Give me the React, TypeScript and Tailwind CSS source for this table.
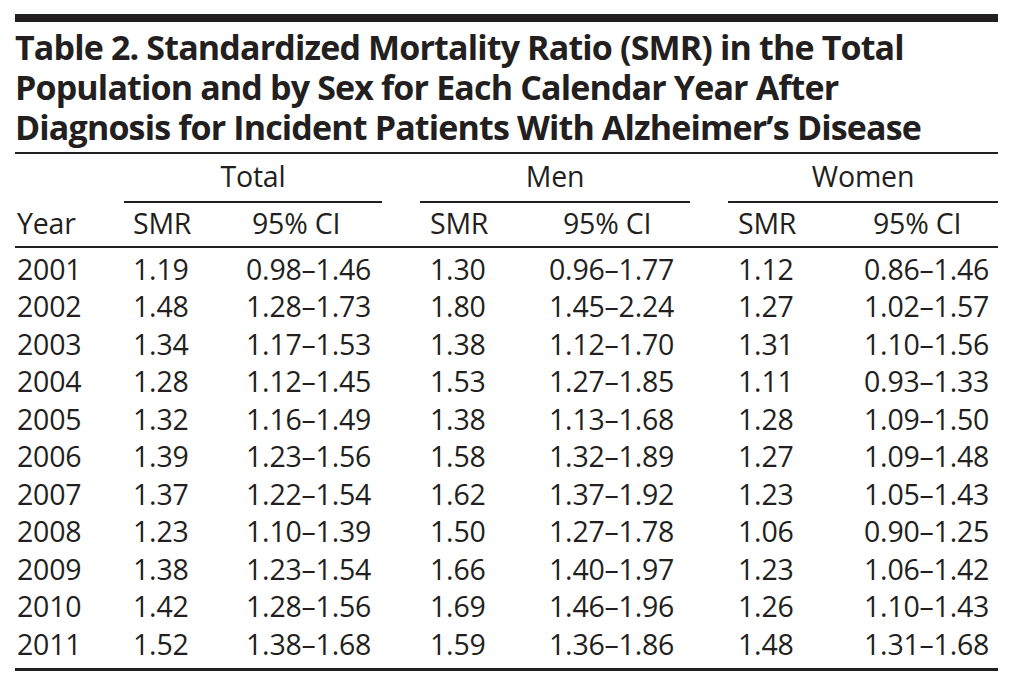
const rows = [
  ["2001", "1.19", "0.98–1.46", "1.30", "0.96–1.77", "1.12", "0.86–1.46"],
  ["2002", "1.48", "1.28–1.73", "1.80", "1.45–2.24", "1.27", "1.02–1.57"],
  ["2003", "1.34", "1.17–1.53", "1.38", "1.12–1.70", "1.31", "1.10–1.56"],
  ["2004", "1.28", "1.12–1.45", "1.53", "1.27–1.85", "1.11", "0.93–1.33"],
  ["2005", "1.32", "1.16–1.49", "1.38", "1.13–1.68", "1.28", "1.09–1.50"],
  ["2006", "1.39", "1.23–1.56", "1.58", "1.32–1.89", "1.27", "1.09–1.48"],
  ["2007", "1.37", "1.22–1.54", "1.62", "1.37–1.92", "1.23", "1.05–1.43"],
  ["2008", "1.23", "1.10–1.39", "1.50", "1.27–1.78", "1.06", "0.90–1.25"],
  ["2009", "1.38", "1.23–1.54", "1.66", "1.40–1.97", "1.23", "1.06–1.42"],
  ["2010", "1.42", "1.28–1.56", "1.69", "1.46–1.96", "1.26", "1.10–1.43"],
  ["2011", "1.52", "1.38–1.68", "1.59", "1.36–1.86", "1.48", "1.31–1.68"],
];

const grid =
  "grid grid-cols-[109px_112px_146px_38px_119px_151px_38px_126px_144px]";

export default function App() {
  return (
    <div className="w-[1010px] h-[682px] bg-white text-[#231f20] font-['Open_Sans',sans-serif] overflow-hidden">
      <div className="ml-[15px] w-[983px] pt-[14px]">
        <div className="h-[8px] bg-[#231f20]" />
        <h1 className="pt-[5px] pb-[5px] text-[34px] font-bold leading-[40px] tracking-[-0.85px] border-b-2 border-[#231f20]">
          Table 2. Standardized Mortality Ratio (SMR) in the Total
          <br />
          Population and by Sex for Each Calendar Year After
          <br />
          Diagnosis for Incident Patients With Alzheimer’s Disease
        </h1>

        <div className="text-[28.5px] leading-none tracking-[-0.2px]">
          <div className={`${grid} h-[49px]`}>
            <div />
            <div className="col-span-2 flex items-center justify-center pb-[2px] border-b-2 border-[#231f20]">
              Total
            </div>
            <div />
            <div className="col-span-2 flex items-center justify-center pb-[2px] border-b-2 border-[#231f20]">
              Men
            </div>
            <div />
            <div className="col-span-2 flex items-center justify-center pb-[2px] border-b-2 border-[#231f20]">
              Women
            </div>
          </div>

          <div className={`${grid} h-[45px] items-center pb-[2px] border-b-2 border-[#231f20]`}>
            <div className="pl-[2px]">Year</div>
            <div className="pl-[9px]">SMR</div>
            <div className="pl-[16px]">95% CI</div>
            <div />
            <div className="pl-[10px]">SMR</div>
            <div className="pl-[24px]">95% CI</div>
            <div />
            <div className="pl-[10px]">SMR</div>
            <div className="pl-[19px]">95% CI</div>
          </div>

          <div className="pt-[2px] pb-[5px] border-b-[3px] border-[#231f20]">
            {rows.map((r) => (
              <div key={r[0]} className={`${grid} h-[37.55px] items-center`}>
                <div className="pl-[2px]">{r[0]}</div>
                <div className="pl-[9px]">{r[1]}</div>
                <div className="pl-[10px]">{r[2]}</div>
                <div />
                <div className="pl-[10px]">{r[3]}</div>
                <div className="pl-[10px]">{r[4]}</div>
                <div />
                <div className="pl-[10px]">{r[5]}</div>
                <div className="pl-[10px]">{r[6]}</div>
              </div>
            ))}
          </div>
        </div>
      </div>
    </div>
  );
}
